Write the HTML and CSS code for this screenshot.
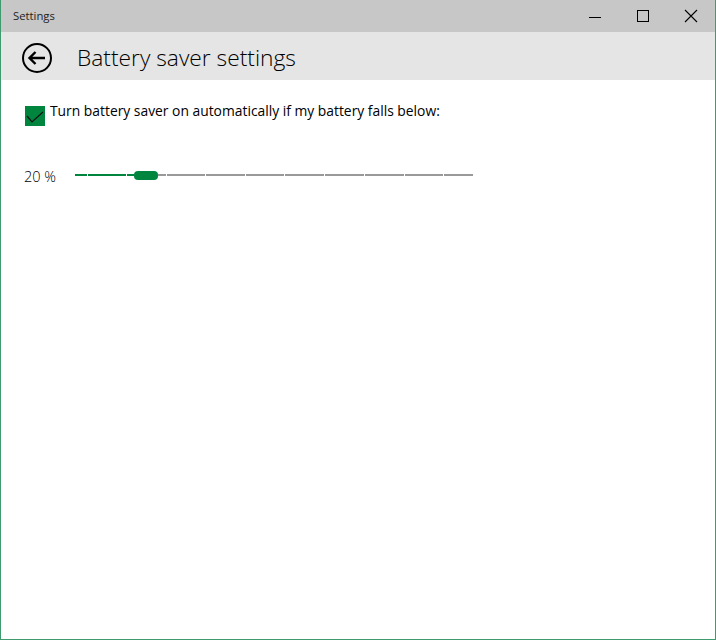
FILE: index.html
```html
<!DOCTYPE html>
<html lang="en">
<head>
<meta charset="utf-8">
<title>Settings</title>
<link rel="stylesheet" href="styles.css">
</head>
<body>
<div class="window">
  <header class="titlebar">
    <span class="app-name">Settings</span>
    <div class="controls">
      <button class="ctrl" aria-label="Minimize"><svg width="14" height="14" viewBox="0 0 14 14"><path d="M1 8.5H13" stroke="#000" fill="none"/></svg></button>
      <button class="ctrl" aria-label="Maximize"><svg width="14" height="14" viewBox="0 0 14 14"><rect x="1.5" y="1.5" width="11" height="11" stroke="#000" fill="none"/></svg></button>
      <button class="ctrl" aria-label="Close"><svg width="14" height="14" viewBox="0 0 14 14"><path d="M1 1L13 13M13 1L1 13" stroke="#000" stroke-width="1.1" fill="none"/></svg></button>
    </div>
  </header>
  <div class="pagebar">
    <button class="back" aria-label="Back">
      <svg width="32" height="32" viewBox="0 0 32 32"><circle cx="16" cy="16" r="14" stroke="#000" stroke-width="2" fill="none"/><path d="M24 16H9.5M14.5 10L8.5 16L14.5 22" stroke="#000" stroke-width="2.4" fill="none"/></svg>
    </button>
    <h1 class="page-title">Battery saver settings</h1>
  </div>
  <main class="content">
    <label class="check-row">
      <span class="checkbox"><svg width="20" height="20" viewBox="0 0 20 20"><path d="M2 10L7 16L18 6" stroke="#111" stroke-width="1.2" fill="none"/></svg></span>
      <span class="check-label">Turn battery saver on automatically if my battery falls below:</span>
    </label>
    <div class="slider-row">
      <span class="value">20 %</span>
      <div class="slider">
        <span class="seg on s12"></span>
        <span class="seg on s38"></span>
        <span class="seg on s7"></span>
        <span class="thumb"></span>
        <span class="seg s8"></span>
        <span class="seg s38"></span>
        <span class="seg s39"></span>
        <span class="seg s38"></span>
        <span class="seg s39"></span>
        <span class="seg s39"></span>
        <span class="seg s39"></span>
        <span class="seg s38"></span>
        <span class="seg s29"></span>
      </div>
    </div>
  </main>
</div>
</body>
</html>
```
FILE: styles.css
```css
* { box-sizing: border-box; }
html, body { margin: 0; height: 100%; }
body { font-family: "Open Sans", "Noto Sans", sans-serif; color: #111; background: #fff; overflow: hidden; }
.window { width: 716px; height: 640px; display: flex; flex-direction: column; border: 1px solid #3f9a6d; border-top: 0; }
.titlebar { height: 32px; flex: none; background: #c7c7c7; display: flex; align-items: center; justify-content: space-between; padding-left: 12px; }
.app-name { font-size: 11.3px; color: #222; padding-bottom: 2px; }
.controls { display: flex; }
.ctrl { width: 48px; height: 32px; padding: 0; border: 0; background: none; display: flex; align-items: center; justify-content: center; }
.pagebar { height: 48px; flex: none; background: #e5e5e5; display: flex; align-items: center; padding-left: 20px; }
.back { width: 32px; height: 32px; padding: 0; border: 0; background: none; margin: 4px 24px 0 0; display: block; }
.page-title { margin: 0; padding-top: 2px; font-size: 22.75px; font-weight: 300; color: #000; }
.content { flex: 1; padding: 21px 0 0 24px; }
.check-row { display: flex; align-items: flex-start; }
.checkbox { width: 20px; height: 20px; margin-top: 5px; background: #00853f; display: block; flex: none; }
.checkbox svg { display: block; }
.check-label { font-size: 13.85px; line-height: 20px; margin-left: 5px; color: #000; }
.slider-row { display: flex; align-items: center; margin-top: 37px; height: 24px; }
.value { font-size: 14.5px; font-weight: 300; line-height: 20px; width: 50px; margin-left: -1px; padding-top: 4px; margin-right: 1px; color: #000; }
.slider { display: flex; align-items: center; width: 398px; height: 9px; }
.seg { height: 2px; background: #999; margin-right: 1px; flex: none; }
.seg:last-child { margin-right: 0; }
.seg.on { background: #00853f; }
.s7 { width: 7px; margin-right: 0; }
.s8 { width: 8px; }
.s12 { width: 12px; }
.s29 { width: 29px; }
.s38 { width: 38px; }
.s39 { width: 39px; }
.thumb { width: 24px; height: 9px; border-radius: 4px; background: #00853f; flex: none; }
```
